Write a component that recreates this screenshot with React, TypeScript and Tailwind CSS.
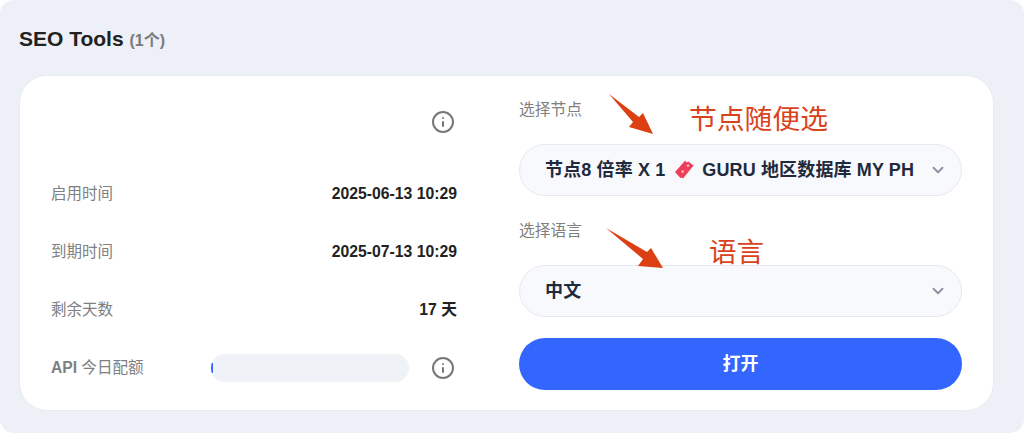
import { Info, ChevronDown } from 'lucide-react';

const font = { sans: 'font-["Liberation_Sans","Noto_Sans_CJK_SC",sans-serif]' };

function TicketIcon() {
  return (
    <svg className="ml-[9px] mr-[8px] inline-block h-[20px] w-[20px] align-[-4px]" viewBox="0 0 20 20">
      <path d="M1 12 L11 0.8 L13 2.4 L14.2 1.6 L19.6 5.6 L9 18.6 L7.4 17.4 L6.4 18 Z" fill="#ee3f5a" />
      <circle cx="14" cy="5.6" r="1.2" fill="#fbd0d6" />
      <circle cx="8.6" cy="11.6" r="1.3" fill="#fbb6c0" />
    </svg>
  );
}

function InfoRow({ label, value }: { label: string; value: string }) {
  return (
    <div className="flex h-[58px] items-center justify-between">
      <span className="text-[15.5px] text-[#808080]">{label}</span>
      <span className="text-[15.75px] font-bold text-[#222222]">{value}</span>
    </div>
  );
}

function SelectBox({ children }: { children: React.ReactNode }) {
  return (
    <div className="relative z-10 flex h-[52px] items-center justify-between rounded-full border border-[#e6e9f0] bg-[#f8f9fc] pl-[25px] pr-[14px]">
      <span className="whitespace-nowrap text-[18px] font-bold tracking-[0.13px] text-[#1f2a3d]">{children}</span>
      <ChevronDown className="h-[18px] w-[18px] text-[#8c92a4]" strokeWidth={2.5} />
    </div>
  );
}

export default function App() {
  return (
    <div className={`relative h-[433px] w-[1024px] overflow-hidden bg-white ${font.sans}`}>
      <div className="h-full rounded-[14px] bg-[#edf0f7] px-[19px] pb-[22px]">
        <div className="flex h-[75px] items-center pt-[3px]">
          <h2 className="text-[21px] font-bold text-[#222222]">
            SEO Tools <span className="text-[16px] text-[#7a7a7a]">(1个)</span>
          </h2>
        </div>

        <div className="flex h-[336px] w-[975px] gap-[62px] rounded-[28px] border border-[#e8ebf2] bg-white px-[31px]">
          <div className="w-[406px]">
            <div className="mt-[34px] flex h-6 justify-end pr-[2px]">
              <Info className="h-6 w-6 text-[#777777]" strokeWidth={2} />
            </div>
            <div className="mt-[31px]">
              <InfoRow label="启用时间" value="2025-06-13 10:29" />
              <InfoRow label="到期时间" value="2025-07-13 10:29" />
              <InfoRow label="剩余天数" value="17 天" />
              <div className="flex h-[58px] items-center justify-between">
                <span className="text-[15.6px] text-[#808080]">
                  <b className="font-bold">API</b> 今日配额
                </span>
                <div className="flex items-center gap-[22px] pr-[2px]">
                  <div className="h-[28px] w-[198px] overflow-hidden rounded-full bg-[#eff2f7]">
                    <div className="mt-[9px] h-[10px] w-[1.5px] bg-[#3366ff]" />
                  </div>
                  <Info className="h-6 w-6 text-[#777777]" strokeWidth={2} />
                </div>
              </div>
            </div>
          </div>

          <div className="w-[443px] pt-[24px]">
            <div className="mb-[24px] h-[20px] text-[15.75px] leading-[20px] text-[#808080]">选择节点</div>
            <SelectBox>
              节点8 倍率 X 1<TicketIcon />GURU 地区数据库 MY PH
            </SelectBox>
            <div className="mb-[24px] mt-[25px] h-[20px] text-[15.75px] leading-[20px] text-[#808080]">选择语言</div>
            <SelectBox>中文</SelectBox>
            <button className="mt-[21px] h-[52px] w-full rounded-full bg-[#3366ff] text-[18px] font-bold text-white">
              打开
            </button>
          </div>
        </div>
      </div>

      {/* hand-drawn annotations on top of the screenshot */}
      <div className="absolute left-[689px] top-[101px] text-[27.8px] leading-[38px] text-[#d9431b]">节点随便选</div>
      <div className="absolute left-[709px] top-[234px] text-[27.6px] leading-[38px] text-[#d9431b]">语言</div>
      <svg className="pointer-events-none absolute left-0 top-0 z-20" width="1024" height="433">
        <polygon points="609,94 639,117 643,113 653,134 629,127 633,122" fill="#dc3f12" />
        <polygon points="606,228 647,252 651,248 663,268 638,266 643,259" fill="#dc3f12" />
      </svg>
    </div>
  );
}
